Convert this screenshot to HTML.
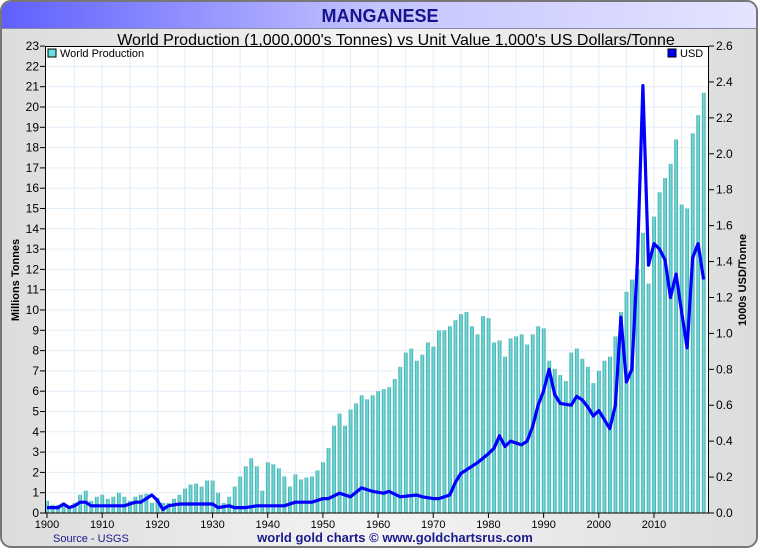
<!DOCTYPE html>
<html><head><meta charset="utf-8"><style>
body{margin:0;width:760px;height:550px;overflow:hidden;background:#fff;font-family:"Liberation Sans",sans-serif}
</style></head><body>
<svg id="s" width="760" height="550" xmlns="http://www.w3.org/2000/svg" font-family="Liberation Sans, sans-serif">
<defs>
<linearGradient id="tb" x1="0" x2="1" y1="0" y2="0"><stop offset="0" stop-color="#5f5fff"/><stop offset="0.5" stop-color="#c4c4ff"/><stop offset="1" stop-color="#e4e4ff"/></linearGradient>
<linearGradient id="bg" x1="0" x2="1" y1="0" y2="0"><stop offset="0" stop-color="#dcdcdc"/><stop offset="0.5" stop-color="#f4f4f4"/><stop offset="1" stop-color="#dcdcdc"/></linearGradient>
<linearGradient id="bar" x1="0" x2="1" y1="0" y2="0"><stop offset="0" stop-color="#35a8a8"/><stop offset="0.5" stop-color="#80dede"/><stop offset="1" stop-color="#35a8a8"/></linearGradient>
</defs>
<rect x="1" y="1" width="756" height="546" rx="10" fill="url(#bg)" stroke="#777" stroke-width="2"/>
<path d="M2,28 V11 A9,9 0 0 1 11,2 H747 A9,9 0 0 1 756,11 V28 Z" fill="url(#tb)"/>
<line x1="2" y1="28.5" x2="756" y2="28.5" stroke="#8888aa"/>
<text x="380" y="22" text-anchor="middle" font-size="18" font-weight="bold" fill="#14148c">MANGANESE</text>
<text x="396" y="45" text-anchor="middle" font-size="16" fill="#000">World Production (1,000,000's Tonnes) vs Unit Value 1,000's US Dollars/Tonne</text>
<rect x="45" y="46" width="664" height="467" fill="#fff"/>
<g id="grid" stroke="#e2eef8" stroke-width="1"></g>
<g id="bars"></g>
<polyline id="line" fill="none" stroke="#0000ff" stroke-width="3.2" stroke-linejoin="round"/>
<rect x="45.5" y="46.5" width="663" height="466.5" fill="none" stroke="#000"/>
<g id="ax" font-size="12" fill="#000"></g>
<rect x="48" y="49" width="8" height="8" fill="#66e0e0" stroke="#000"/>
<text x="60" y="57" font-size="11">World Production</text>
<rect x="668" y="49" width="8" height="8" fill="#0000ff" stroke="#000"/>
<text x="680" y="57" font-size="11">USD</text>
<text transform="translate(19,280) rotate(-90)" text-anchor="middle" font-size="11" font-weight="bold">Millions Tonnes</text>
<text transform="translate(746,280) rotate(-90)" text-anchor="middle" font-size="11" font-weight="bold">1000s USD/Tonne</text>
<text x="53" y="542" font-size="11" fill="#1a1a8c">Source - USGS</text>
<text x="395" y="542" text-anchor="middle" font-size="13" font-weight="bold" fill="#1a1a8c">world gold charts © www.goldchartsrus.com</text>
</svg>
<script>
var NS="http://www.w3.org/2000/svg";
function el(p,t,a,tx){var e=document.createElementNS(NS,t);for(var k in a)e.setAttribute(k,a[k]);if(tx!=null)e.textContent=tx;document.getElementById(p).appendChild(e);return e;}
var X=function(y){return 47+(y-1900)*5.518;};
var Y=function(v){return 513-v*20.3;};
var R=function(v){return 513-v*179.6;};
for(var y=1905;y<2020;y+=5)el("grid","line",{x1:X(y),x2:X(y),y1:46,y2:513});
for(var v=1;v<23;v++)el("grid","line",{x1:45,x2:709,y1:Y(v),y2:Y(v)});
var P=[.6,.4,.4,.4,.3,.5,.9,1.1,.6,.8,.9,.7,.8,1.0,.8,.6,.8,.9,.95,.5,.75,.5,.5,.7,.9,1.2,1.4,1.45,1.3,1.6,1.6,1.0,.5,.8,1.3,1.8,2.3,2.7,2.3,1.1,2.5,2.4,2.2,1.8,1.3,1.9,1.65,1.75,1.8,2.1,2.5,3.2,4.3,4.9,4.3,5.1,5.4,5.8,5.6,5.8,6.0,6.1,6.2,6.6,7.2,7.9,8.1,7.5,7.8,8.4,8.2,9.0,9.0,9.2,9.5,9.8,9.9,9.2,8.8,9.7,9.6,8.4,8.5,7.7,8.6,8.7,8.8,8.3,8.8,9.2,9.1,7.5,7.1,6.8,6.5,7.9,8.1,7.6,7.2,6.4,7.0,7.5,7.7,8.7,9.9,10.9,11.5,12.0,13.8,11.3,14.6,15.8,16.5,17.2,18.4,15.2,15.0,18.7,19.6,20.7];
for(var i=0;i<P.length;i++){var x=X(1900+i);el("bars","rect",{x:x-1.8,y:Y(P[i]),width:3.8,height:P[i]*20.3,fill:"url(#bar)"});}
var U={1900:.03,1902:.03,1903:.05,1904:.03,1905:.04,1906:.06,1907:.06,1908:.04,1910:.04,1914:.04,1916:.06,1917:.06,1919:.1,1920:.07,1921:.02,1922:.04,1924:.05,1930:.05,1931:.03,1933:.04,1934:.03,1936:.03,1938:.04,1943:.04,1945:.06,1948:.06,1950:.08,1951:.08,1953:.11,1955:.09,1957:.14,1959:.12,1961:.11,1962:.12,1964:.09,1967:.1,1968:.09,1970:.08,1971:.08,1973:.1,1974:.17,1975:.22,1977:.26,1978:.28,1980:.33,1981:.36,1982:.43,1983:.37,1984:.4,1986:.38,1987:.4,1988:.48,1989:.6,1990:.68,1991:.8,1992:.66,1993:.61,1995:.6,1996:.65,1997:.63,1998:.59,1999:.54,2000:.57,2001:.52,2002:.47,2003:.6,2004:1.09,2005:.73,2006:.8,2007:1.4,2008:2.38,2009:1.38,2010:1.5,2011:1.47,2012:1.41,2013:1.2,2014:1.33,2015:1.12,2016:.92,2017:1.42,2018:1.5,2019:1.3};
var pts=[];for(var k in U)pts.push(X(+k).toFixed(1)+","+R(U[k]).toFixed(1));
document.getElementById("line").setAttribute("points",pts.join(" "));
for(var v=0;v<=23;v++){el("ax","line",{x1:40,x2:45,y1:Y(v),y2:Y(v),stroke:"#000"});el("ax","text",{x:39,y:Y(v)+4,"text-anchor":"end"},v);}
for(var v=0;v<=13;v++){var yy=R(v*0.2);el("ax","line",{x1:709,x2:714,y1:yy,y2:yy,stroke:"#000"});el("ax","text",{x:716,y:yy+4},(v*0.2).toFixed(1));}
for(var y=1900;y<=2010;y+=10){el("ax","line",{x1:X(y),x2:X(y),y1:513,y2:518,stroke:"#000"});el("ax","text",{x:X(y),y:528,"text-anchor":"middle","font-size":"11"},y);}
</script>
</body></html>
